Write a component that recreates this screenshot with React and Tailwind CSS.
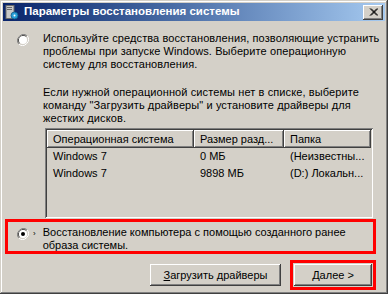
import React from 'react';

const font = { fontFamily: '"Liberation Sans", "DejaVu Sans", sans-serif' };

const Radio = ({ checked }) => (
  <svg width="12" height="12" viewBox="0 0 12 12" className="shrink-0">
    <path d="M10.2 1.8A6 6 0 0 0 1.8 10.2" stroke="#808080" strokeWidth="1" fill="none" />
    <path d="M9.5 2.5A5 5 0 0 0 2.5 9.5" stroke="#404040" strokeWidth="1" fill="none" />
    <path d="M1.8 10.2A6 6 0 0 0 10.2 1.8" stroke="#ffffff" strokeWidth="1" fill="none" />
    <path d="M2.5 9.5A5 5 0 0 0 9.5 2.5" stroke="#d4d0c8" strokeWidth="1" fill="none" />
    <circle cx="6" cy="6" r="4" fill="#ffffff" />
    {checked && <circle cx="6" cy="6" r="2" fill="#000000" />}
  </svg>
);

const raised =
  'shadow-[inset_-1px_-1px_#404040,inset_1px_1px_#ffffff,inset_-2px_-2px_#808080,inset_2px_2px_#d4d0c8]';

const Button = ({ children, className }) => (
  <button
    className={`h-[22px] bg-[#d4d0c8] text-[11px] text-black ${raised} ${className}`}
    style={font}
  >
    {children}
  </button>
);

const rows = [
  { os: 'Windows 7', size: '0 МБ', dir: '(Неизвестны...' },
  { os: 'Windows 7', size: '9898 МБ', dir: '(D:) Локальн...' },
];

export default function App() {
  return (
    <div
      className="w-[388px] h-[294px] bg-[#d4d0c8] p-[3px] shadow-[inset_-1px_-1px_#404040,inset_1px_1px_#d4d0c8,inset_-2px_-2px_#808080,inset_2px_2px_#ffffff] text-black text-[11px]"
      style={font}
    >
      {/* title bar */}
      <div className="h-[18px] flex items-center bg-gradient-to-r from-[#0a246a] to-[#a6caf0] pl-[2px] pr-[2px]">
        <svg width="14" height="15" viewBox="0 0 14 15" className="mr-[5px]">
          <rect x="1" y="0.5" width="8" height="13" fill="#c8c8c8" stroke="#6a6a6a" />
          <rect x="2" y="2" width="5" height="1" fill="#6a6a6a" />
          <rect x="2" y="4" width="5" height="1" fill="#6a6a6a" />
          <circle cx="9.5" cy="10.5" r="3.5" fill="#2aa0d8" stroke="#0a5a8a" strokeWidth="0.8" />
          <circle cx="9.5" cy="10.5" r="1" fill="#ffffff" />
        </svg>
        <span className="text-white font-bold text-[11.5px] leading-none">
          Параметры восстановления системы
        </span>
        <div className={`ml-auto w-[20px] h-[15px] bg-[#d4d0c8] flex items-center justify-center ${raised}`}>
          <svg width="9" height="8" viewBox="0 0 9 8">
            <path d="M1 0.5L8 7.5M8 0.5L1 7.5M2 0.5L9 7.5M9 0.5L2 7.5" stroke="#000" strokeWidth="1" />
          </svg>
        </div>
      </div>

      {/* option 1 */}
      <div className="flex pl-[14px] pt-[11px]">
        <div className="pt-[2px]">
          <Radio />
        </div>
        <div className="ml-[14px] leading-[13px] tracking-[0.1px] whitespace-nowrap">
          <p>
            Используйте средства восстановления, позволяющие устранить
            <br />
            проблемы при запуске Windows. Выберите операционную
            <br />
            систему для восстановления.
          </p>
          <p className="mt-[15px]">
            Если нужной операционной системы нет в списке, выберите
            <br />
            команду "Загрузить драйверы" и установите драйверы для
            <br />
            жестких дисков.
          </p>
        </div>
      </div>

      {/* list */}
      <div className="ml-[42px] mt-[3px] w-[328px] h-[90px] bg-[#d4d0c8] shadow-[inset_1px_1px_#808080,inset_-1px_-1px_#ffffff,inset_2px_2px_#404040,inset_-2px_-2px_#d4d0c8] p-[2px]">
        <div className="grid grid-cols-[147px_90px_87px] h-[18px]">
          {['Операционная система', 'Размер разд...', 'Папка'].map((h) => (
            <div
              key={h}
              className={`flex items-center pl-[6px] bg-[#d4d0c8] ${raised} whitespace-nowrap overflow-hidden`}
            >
              {h}
            </div>
          ))}
        </div>
        {rows.map((r, i) => (
          <div key={i} className="grid grid-cols-[147px_90px_87px] h-[17px] items-center">
            <div className="pl-[6px]">{r.os}</div>
            <div className="pl-[6px]">{r.size}</div>
            <div className="pl-[6px] whitespace-nowrap">{r.dir}</div>
          </div>
        ))}
      </div>

      {/* option 2 */}
      <div className="ml-[2px] mt-[1px] w-[371px] h-[35px] border-[3px] border-[#ff0000] flex pl-[9px] pt-[4px]">
        <div className="pt-[2px] flex items-start">
          <Radio checked />
          <span className="ml-[4px] text-[8px] leading-[12px]">›</span>
        </div>
        <p className="ml-[7px] leading-[13px] whitespace-nowrap">
          Восстановление компьютера с помощью созданного ранее
          <br />
          образа системы.
        </p>
      </div>

      {/* buttons */}
      <div className="flex justify-end items-center mt-[6px] pr-[9px]">
        <Button className="w-[131px] mr-[9px]">
          <span className="underline">З</span>агрузить драйверы
        </Button>
        <div className="border-[3px] border-[#ff0000] p-[1px]">
          <Button className="w-[78px] h-[19px]">
            <span className="underline">Д</span>алее &gt;
          </Button>
        </div>
      </div>
    </div>
  );
}
